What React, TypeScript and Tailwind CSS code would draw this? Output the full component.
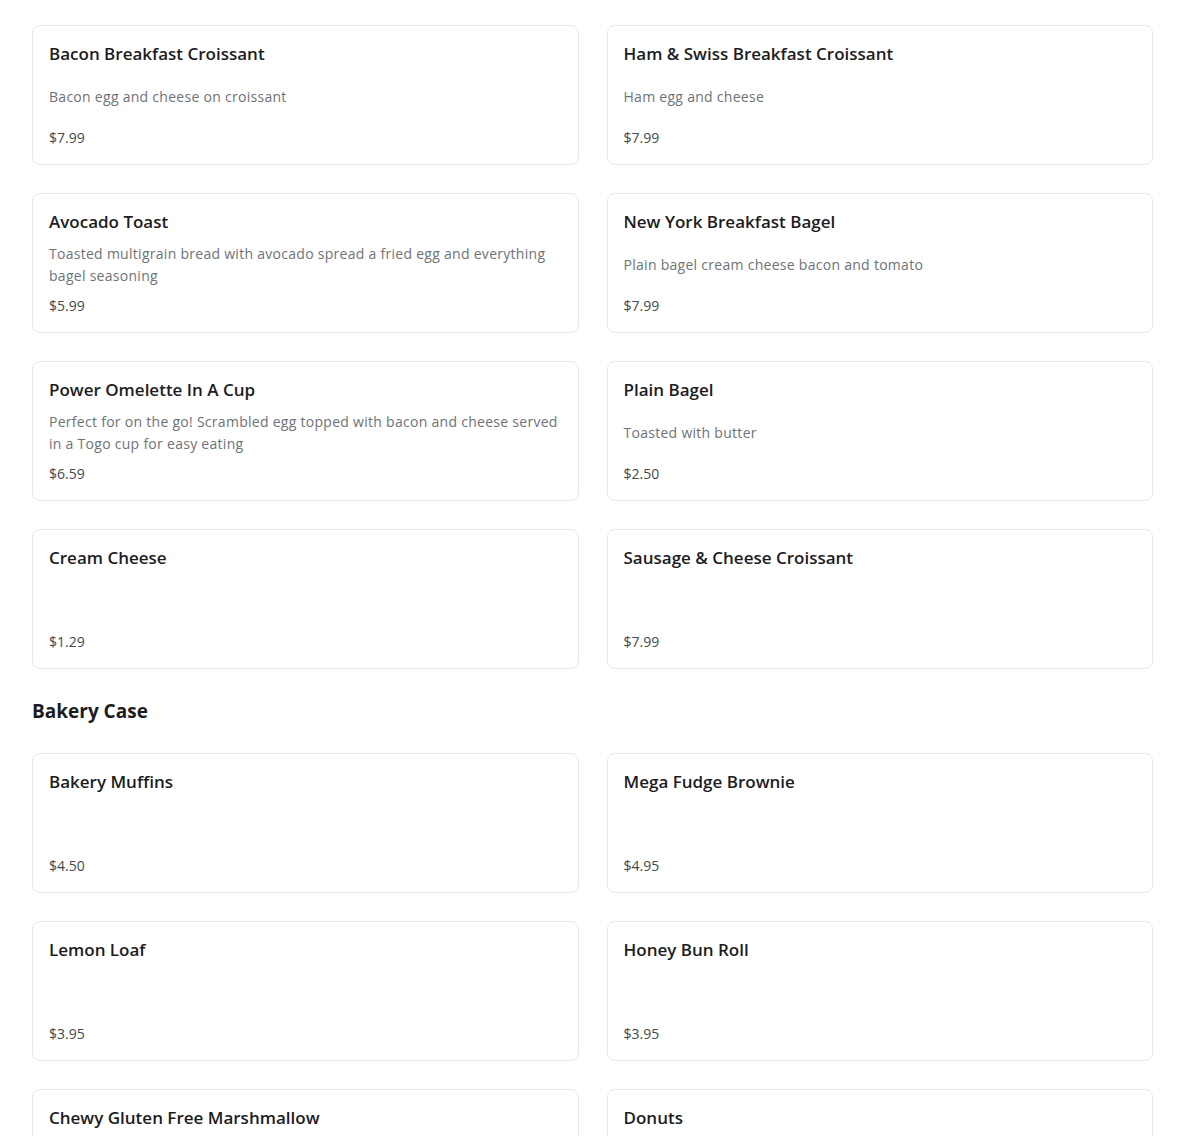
import React from 'react';

type Item = { name: string; description?: string; price: string };

const breakfast: Item[] = [
  { name: 'Bacon Breakfast Croissant', description: 'Bacon egg and cheese on croissant', price: '$7.99' },
  { name: 'Ham & Swiss Breakfast Croissant', description: 'Ham egg and cheese', price: '$7.99' },
  {
    name: 'Avocado Toast',
    description: 'Toasted multigrain bread with avocado spread a fried egg and everything bagel seasoning',
    price: '$5.99',
  },
  { name: 'New York Breakfast Bagel', description: 'Plain bagel cream cheese bacon and tomato', price: '$7.99' },
  {
    name: 'Power Omelette In A Cup',
    description: 'Perfect for on the go! Scrambled egg topped with bacon and cheese served in a Togo cup for easy eating',
    price: '$6.59',
  },
  { name: 'Plain Bagel', description: 'Toasted with butter', price: '$2.50' },
  { name: 'Cream Cheese', price: '$1.29' },
  { name: 'Sausage & Cheese Croissant', price: '$7.99' },
];

const bakery: Item[] = [
  { name: 'Bakery Muffins', price: '$4.50' },
  { name: 'Mega Fudge Brownie', price: '$4.95' },
  { name: 'Lemon Loaf', price: '$3.95' },
  { name: 'Honey Bun Roll', price: '$3.95' },
  { name: 'Chewy Gluten Free Marshmallow', price: '$3.95' },
  { name: 'Donuts', price: '$2.25' },
];

const MenuCard: React.FC<Item> = ({ name, description, price }) => (
  <div className="h-[140px] rounded-lg border border-[#e8e8ec] bg-white p-4 flex flex-col justify-between">
    <h3 className="text-[17px] leading-6 font-semibold text-[#1c1c1f]">{name}</h3>
    <p className="text-[14px] leading-[22px] tracking-[0.02em] text-[#6e7279]">{description}</p>
    <span className="text-sm leading-5 text-[#45484e]">{price}</span>
  </div>
);

const App: React.FC = () => {
  return (
    <div className="min-h-screen bg-white px-8 pt-[25px] pb-8" style={{ fontFamily: '"Open Sans", "Noto Sans", sans-serif' }}>
      <div className="flex flex-col gap-7">
        <div className="grid grid-cols-2 gap-7">
          {breakfast.map((item) => (
            <MenuCard key={item.name} {...item} />
          ))}
        </div>
        <h2 className="text-[19px] leading-7 font-bold text-[#1c1c1f]">Bakery Case</h2>
        <div className="grid grid-cols-2 gap-7">
          {bakery.map((item) => (
            <MenuCard key={item.name} {...item} />
          ))}
        </div>
      </div>
    </div>
  );
};

export default App;
